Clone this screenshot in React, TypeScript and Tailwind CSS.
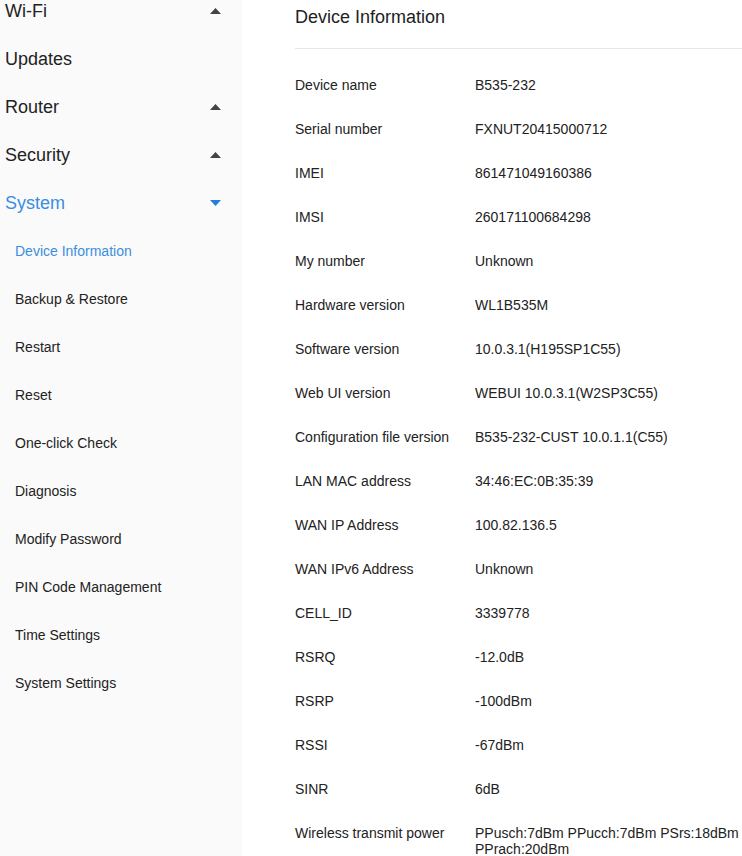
import React from "react";

const top = [
  { label: "Wi-Fi", arrow: "up" },
  { label: "Updates", arrow: null },
  { label: "Router", arrow: "up" },
  { label: "Security", arrow: "up" },
  { label: "System", arrow: "down", active: true },
];

const subs = [
  "Device Information",
  "Backup & Restore",
  "Restart",
  "Reset",
  "One-click Check",
  "Diagnosis",
  "Modify Password",
  "PIN Code Management",
  "Time Settings",
  "System Settings",
];

const rows: [string, string][] = [
  ["Device name", "B535-232"],
  ["Serial number", "FXNUT20415000712"],
  ["IMEI", "861471049160386"],
  ["IMSI", "260171100684298"],
  ["My number", "Unknown"],
  ["Hardware version", "WL1B535M"],
  ["Software version", "10.0.3.1(H195SP1C55)"],
  ["Web UI version", "WEBUI 10.0.3.1(W2SP3C55)"],
  ["Configuration file version", "B535-232-CUST 10.0.1.1(C55)"],
  ["LAN MAC address", "34:46:EC:0B:35:39"],
  ["WAN IP Address", "100.82.136.5"],
  ["WAN IPv6 Address", "Unknown"],
  ["CELL_ID", "3339778"],
  ["RSRQ", "-12.0dB"],
  ["RSRP", "-100dBm"],
  ["RSSI", "-67dBm"],
  ["SINR", "6dB"],
  ["Wireless transmit power", "PPusch:7dBm PPucch:7dBm PSrs:18dBm PPrach:20dBm"],
];

function Arrow({ dir }: { dir: string }) {
  return dir === "up" ? (
    <svg width="11" height="6" viewBox="0 0 11 6">
      <path d="M0 6 L5.5 0 L11 6 Z" fill="#444" />
    </svg>
  ) : (
    <svg width="11" height="6" viewBox="0 0 11 6">
      <path d="M0 0 L11 0 L5.5 6 Z" fill="#1f7fe0" />
    </svg>
  );
}

export default function App() {
  return (
    <div
      className="flex w-[742px] h-[856px] overflow-hidden bg-white text-[#333]"
      style={{ fontFamily: '"Liberation Sans", Arial, sans-serif' }}
    >
      <aside className="w-[242px] shrink-0 bg-[#fafafa]">
        <div className="-mt-[13px]">
          {top.map((t) => (
            <div
              key={t.label}
              className={`flex h-[48px] items-center justify-between pl-[5px] pr-[21px] text-[18px] ${
                t.active ? "text-[#3a8ee0]" : "text-[#222]"
              }`}
            >
              <span>{t.label}</span>
              {t.arrow && <Arrow dir={t.arrow} />}
            </div>
          ))}
          {subs.map((s, i) => (
            <div
              key={s}
              className={`flex h-[48px] items-center pl-[15px] text-[14px] ${
                i === 0 ? "text-[#3a8ee0]" : "text-[#222]"
              }`}
            >
              {s}
            </div>
          ))}
        </div>
      </aside>
      <main className="flex-1 pl-[53px]">
        <div className="flex h-[49px] items-center border-b border-[#e6e6e6] pb-[15px] pt-[1px] text-[18px] text-[#222]">
          Device Information
        </div>
        <div className="pt-[14px]">
          {rows.map(([k, v]) => (
            <div key={k} className="flex h-[44px] pt-[14px] text-[14px] leading-[16px] text-[#222]">
              <div className="w-[180px] shrink-0">{k}</div>
              <div className="flex-1 pr-[2px]">{v}</div>
            </div>
          ))}
        </div>
      </main>
    </div>
  );
}
